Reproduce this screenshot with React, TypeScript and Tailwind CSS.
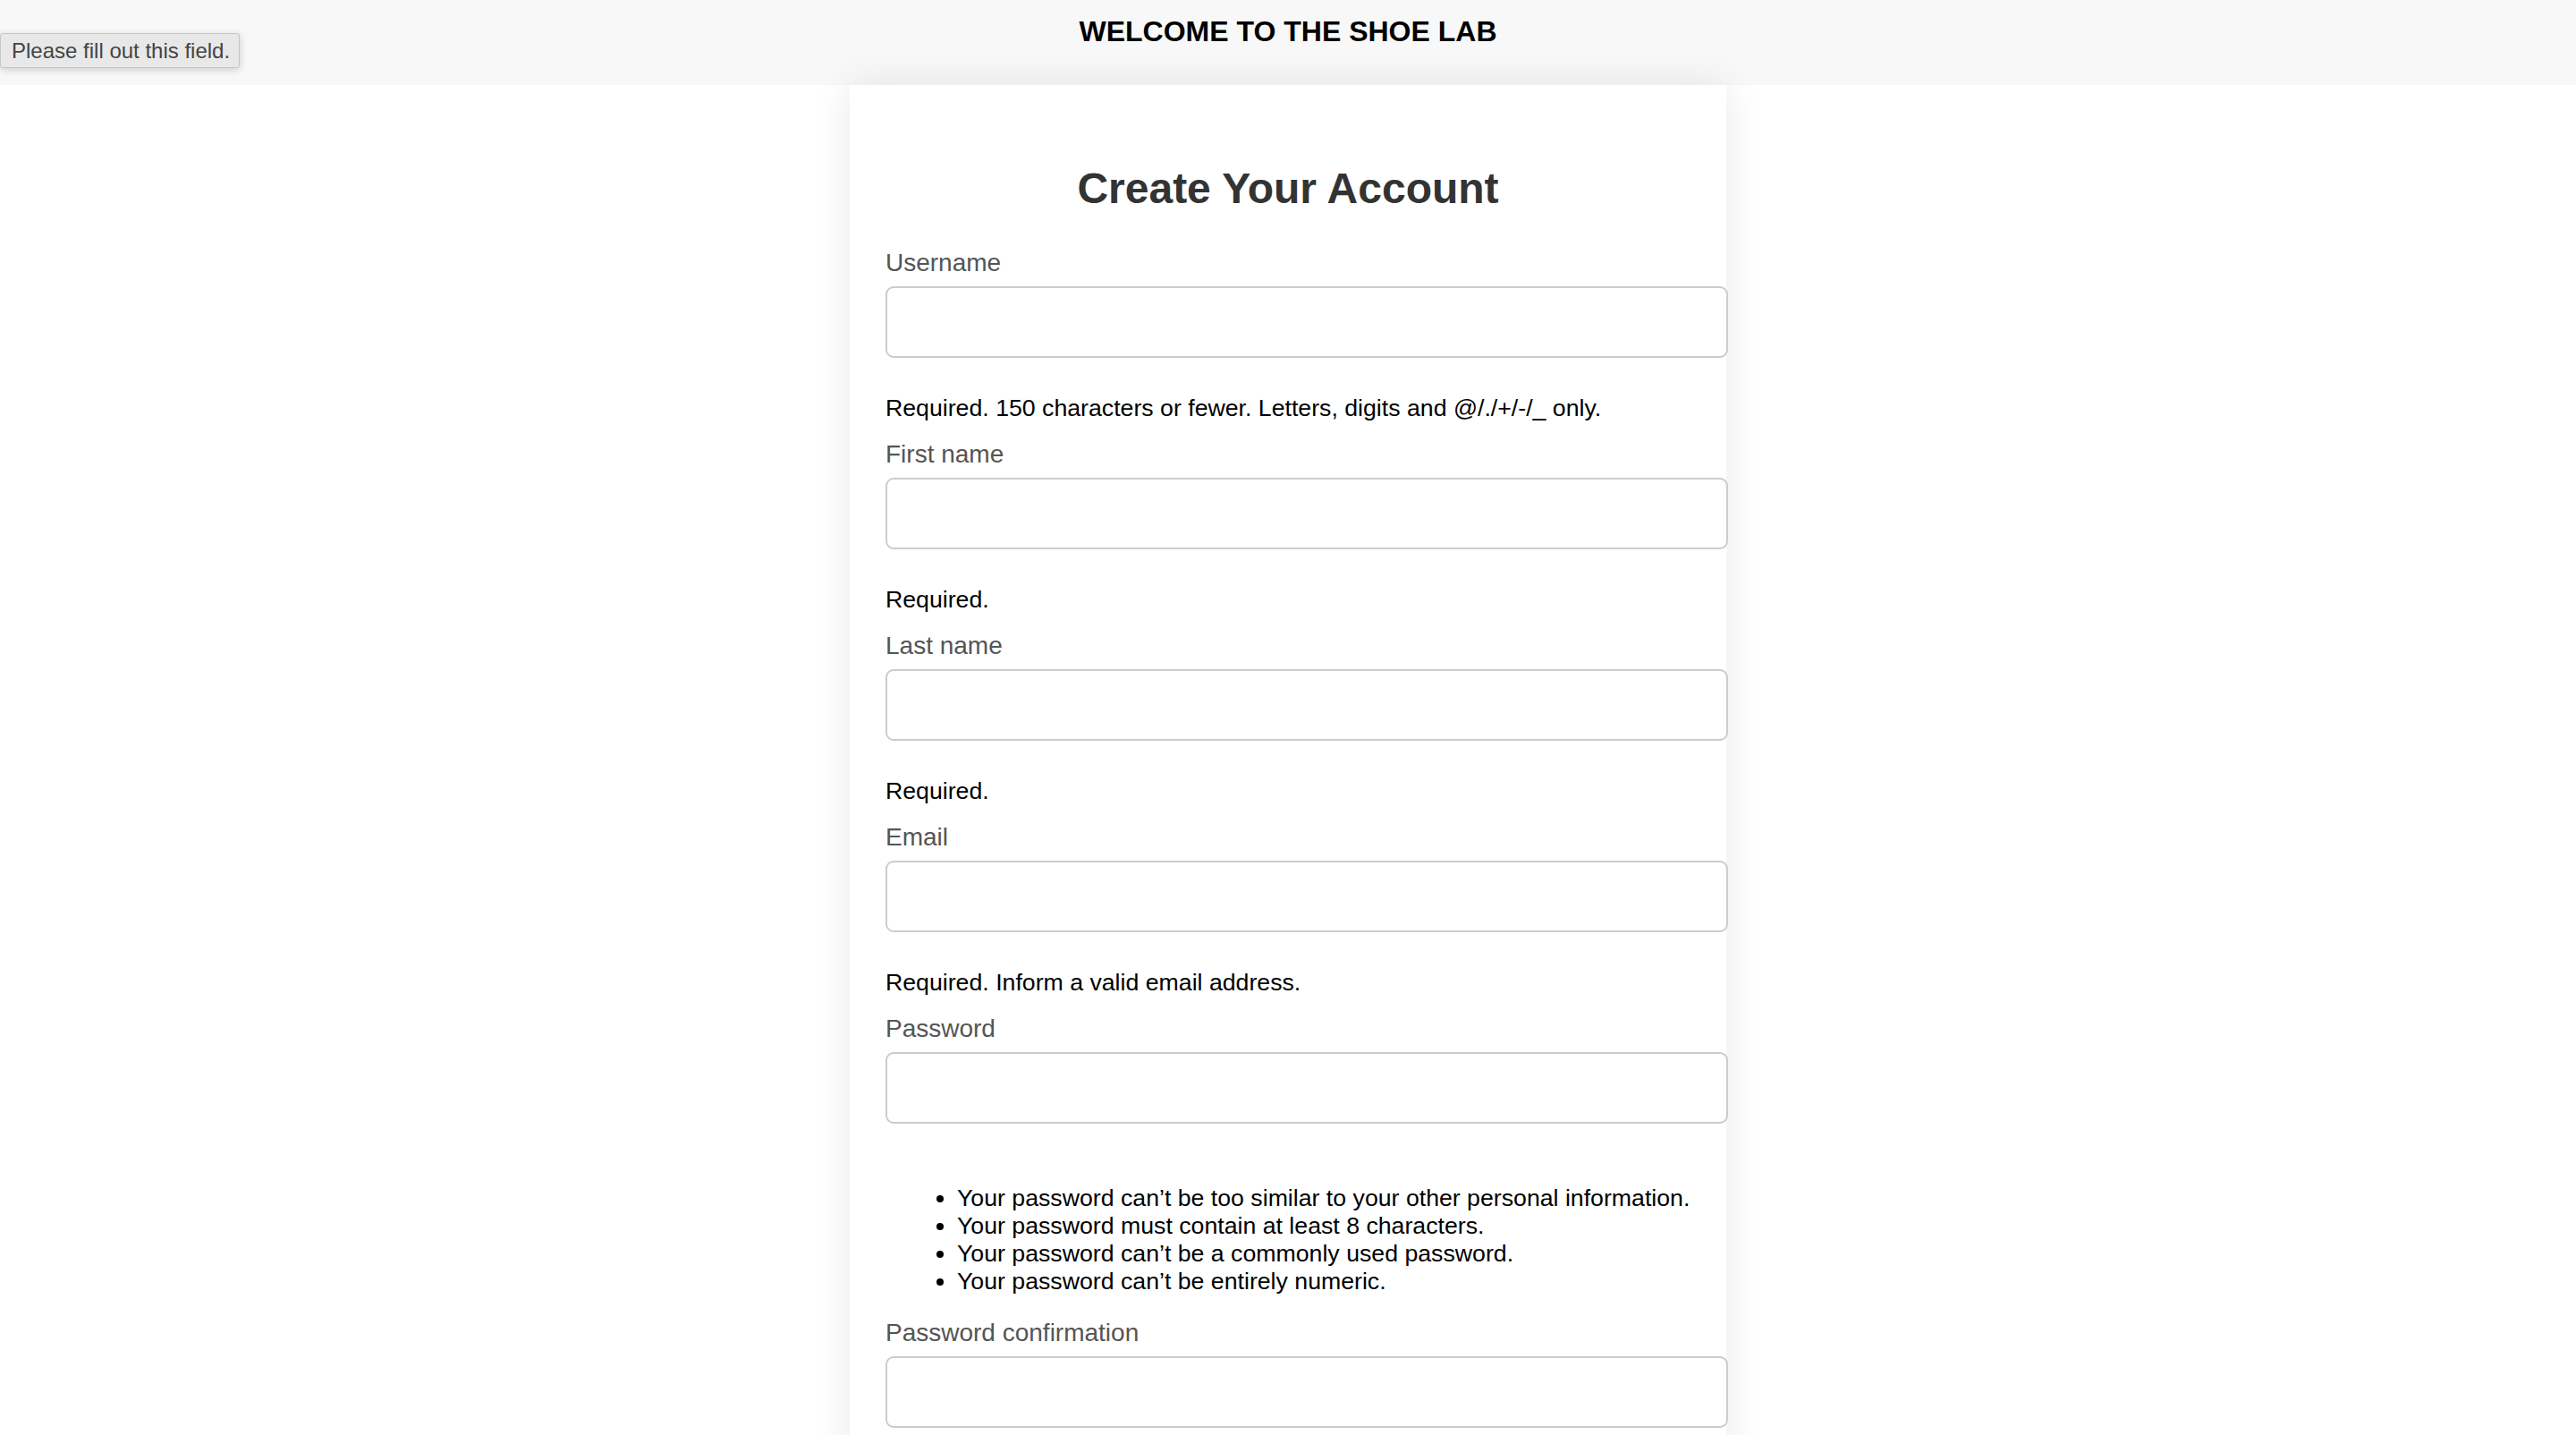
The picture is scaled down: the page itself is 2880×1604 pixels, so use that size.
import React from 'react';

type FieldProps = {
  label: string;
  type?: string;
  help?: React.ReactNode;
};

const Field = ({ label, type = 'text', help }: FieldProps) => (
  <div className="flex flex-col">
    <label className="block text-[28px] leading-[32px] text-[#555555]">{label}</label>
    <input
      type={type}
      className="mt-[10px] box-border h-[80px] w-[942px] rounded-[9px] border-2 border-[#cccccc] bg-white px-[20px] text-[28px] outline-none"
    />
    {help}
  </div>
);

// texte d'aide sous un champ
const Help = ({ children }: { children: React.ReactNode }) => (
  <div className="mb-[20.5px] mt-[39.5px] text-[26.7px] leading-[32px] text-black">{children}</div>
);

const PASSWORD_RULES = [
  'Your password can’t be too similar to your other personal information.',
  'Your password must contain at least 8 characters.',
  'Your password can’t be a commonly used password.',
  'Your password can’t be entirely numeric.',
];

export default function App() {
  return (
    <div className="relative min-h-screen bg-white font-['Liberation_Sans',Arial,sans-serif]">
      <header className="h-[95px] bg-[#f8f8f8] pt-[16px] text-center">
        <h1 className="text-[32px] font-bold leading-[38px] text-black">WELCOME TO THE SHOE LAB</h1>
      </header>

      <div className="absolute left-0 top-[37px] z-20 flex h-[39px] w-[268px] items-center rounded-[3px] border border-[#c6c6c6] bg-[#e8e8e8] pl-[12px] text-[24px] text-[#444444] shadow-[0_2px_8px_rgba(0,0,0,0.18)]">
        Please fill out this field.
      </div>

      <main className="relative z-10 mx-auto w-[980px] bg-white px-[40px] pb-[40px] pt-[88px] shadow-[0_0_40px_rgba(0,0,0,0.09)]">
        <h2 className="text-center text-[48px] font-bold leading-[56px] text-[#333333]">Create Your Account</h2>

        <form className="mt-[39px] flex flex-col">
          <Field
            label="Username"
            help={<Help>Required. 150 characters or fewer. Letters, digits and @/./+/-/_ only.</Help>}
          />
          <Field label="First name" help={<Help>Required.</Help>} />
          <Field label="Last name" help={<Help>Required.</Help>} />
          <Field label="Email" type="email" help={<Help>Required. Inform a valid email address.</Help>} />
          <Field
            label="Password"
            type="password"
            help={
              <ul className="mb-[25.6px] mt-[67.5px] list-disc pl-[80px] text-[26.7px] leading-[31.25px] text-black">
                {PASSWORD_RULES.map((rule) => (
                  <li key={rule}>{rule}</li>
                ))}
              </ul>
            }
          />
          <Field label="Password confirmation" type="password" />
        </form>
      </main>
    </div>
  );
}
